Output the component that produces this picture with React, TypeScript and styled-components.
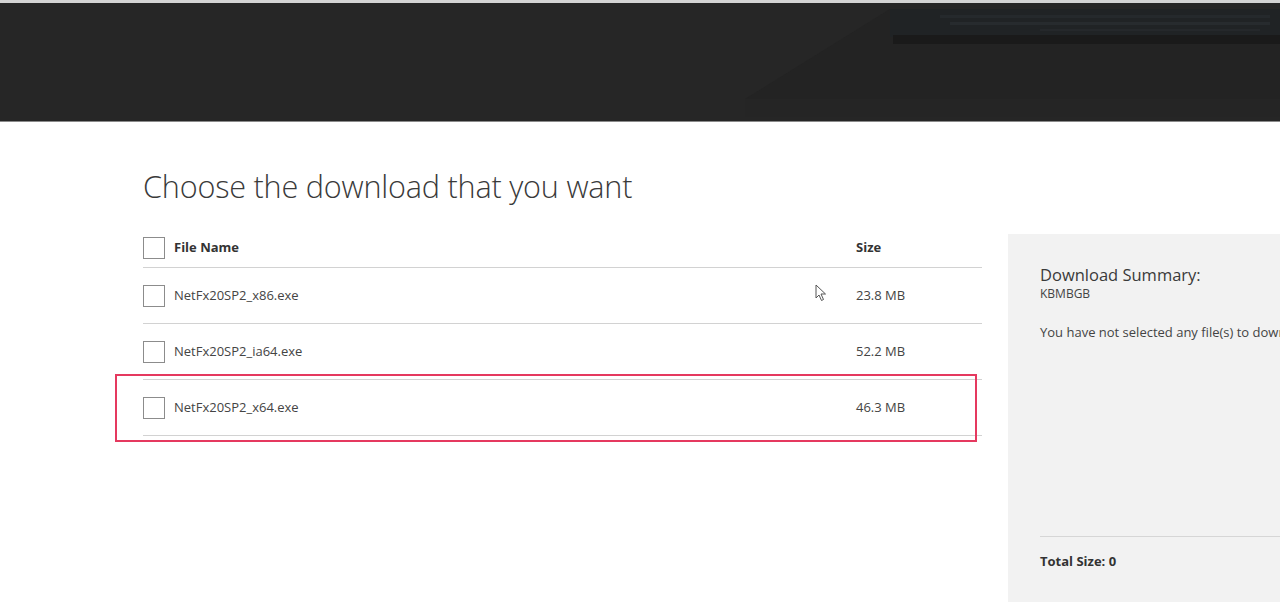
import React from "react";
import styled, { createGlobalStyle } from "styled-components";

const Global = createGlobalStyle`
  html, body { margin: 0; padding: 0; background: #ffffff; overflow: hidden; }
  body { font-family: "Open Sans", "Liberation Sans", sans-serif; color: #333; }
  * { box-sizing: border-box; }
`;

const Page = styled.div`
  width: 1280px;
  height: 602px;
  display: flex;
  flex-direction: column;
`;

const Hero = styled.header`
  position: relative;
  height: 122px;
  background: #262626;
  border-top: 3px solid #d4d4d4;
  border-bottom: 1px solid #8a8a8a;
  overflow: hidden;
`;

const HeroArt = styled.svg`
  position: absolute;
  right: 0;
  top: 0;
  width: 540px;
  height: 118px;
`;

const Main = styled.main`
  flex: 1;
  display: flex;
  gap: 26px;
  padding-left: 143px;
`;

const Content = styled.section`
  width: 839px;
  display: flex;
  flex-direction: column;
`;

const Title = styled.h1`
  margin: 44px 0 0 0;
  font-family: "Open Sans", "Liberation Sans", sans-serif;
  font-weight: 300;
  font-size: 30.6px;
  line-height: 40px;
  color: #3a3a3a;
  letter-spacing: -0.2px;
`;

const Table = styled.div`
  margin-top: 25px;
  display: flex;
  flex-direction: column;
`;

const Row = styled.div<{ $head?: boolean }>`
  position: relative;
  display: grid;
  grid-template-columns: 22px 1fr 126px;
  column-gap: 9px;
  align-items: center;
  height: ${(p) => (p.$head ? "37px" : "56px")};
  padding-bottom: ${(p) => (p.$head ? "2px" : "0")};
  border-bottom: 1px solid #d2d2d2;
  font-size: 13px;
  line-height: 18px;
  font-weight: ${(p) => (p.$head ? 700 : 400)};
  color: ${(p) => (p.$head ? "#333" : "#444")};
`;

const Check = styled.span`
  width: 22px;
  height: 22px;
  border: 1px solid #8c8c8c;
  background: #fff;
  display: block;
`;

const Cell = styled.span`
  margin-top: -2px;
`;

const Highlight = styled.div`
  position: absolute;
  left: -28px;
  right: 5px;
  top: -6px;
  bottom: -7px;
  border: 2px solid #e5395f;
  pointer-events: none;
`;

const Cursor = styled.svg`
  position: absolute;
  left: 815px;
  top: 284px;
  width: 13px;
  height: 18px;
`;

const Summary = styled.aside`
  margin-top: 112px;
  flex: 1;
  background: #f2f2f2;
  padding: 30px 0 0 32px;
  display: flex;
  flex-direction: column;
  overflow: hidden;
  white-space: nowrap;
`;

const SummaryTitle = styled.div`
  font-size: 16.5px;
  line-height: 22px;
  color: #3a3a3a;
`;

const SummaryCode = styled.div`
  font-size: 12px;
  line-height: 16px;
  color: #444;
`;

const SummaryNote = styled.div`
  margin-top: 21px;
  font-size: 13px;
  line-height: 18px;
  color: #444;
`;

const SummaryFooter = styled.div`
  margin-top: 195px;
  border-top: 1px solid #d6d6d6;
  padding-top: 15px;
  font-size: 13px;
  font-weight: 700;
  color: #333;
`;

const files = [
  { name: "NetFx20SP2_x86.exe", size: "23.8 MB" },
  { name: "NetFx20SP2_ia64.exe", size: "52.2 MB" },
  { name: "NetFx20SP2_x64.exe", size: "46.3 MB", marked: true },
];

export default function App() {
  return (
    <Page>
      <Global />
      <Hero>
        <HeroArt viewBox="0 0 540 118" preserveAspectRatio="none">
          <polygon points="5,96 150,6 540,6 540,96" fill="#232323" />
          <rect x="150" y="6" width="390" height="28" fill="#202325" />
          <rect x="153" y="32" width="387" height="9" fill="#1a1a1a" />
          <rect x="200" y="12" width="330" height="3" fill="#25292c" />
          <rect x="210" y="19" width="320" height="3" fill="#272b2e" />
          <rect x="300" y="26" width="220" height="2" fill="#25282b" />
          <rect x="5" y="96" width="535" height="18" fill="#252525" />
        </HeroArt>
      </Hero>
      <Main>
        <Content>
          <Title>Choose the download that you want</Title>
          <Table>
            <Row $head>
              <Check />
              <Cell>File Name</Cell>
              <Cell>Size</Cell>
            </Row>
            {files.map((f) => (
              <Row key={f.name}>
                <Check />
                <Cell>{f.name}</Cell>
                <Cell>{f.size}</Cell>
                {f.marked && <Highlight />}
              </Row>
            ))}
          </Table>
        </Content>
        <Summary>
          <SummaryTitle>Download Summary:</SummaryTitle>
          <SummaryCode>KBMBGB</SummaryCode>
          <SummaryNote>You have not selected any file(s) to download.</SummaryNote>
          <SummaryFooter>Total Size: 0</SummaryFooter>
        </Summary>
      </Main>
      <Cursor viewBox="0 0 13 18">
        <path d="M1 1 L1 14 L4 11 L6.5 16.5 L8.5 15.5 L6 10 L10.5 10 Z" fill="#fff" stroke="#555" strokeWidth="1" strokeLinejoin="round" />
      </Cursor>
    </Page>
  );
}
